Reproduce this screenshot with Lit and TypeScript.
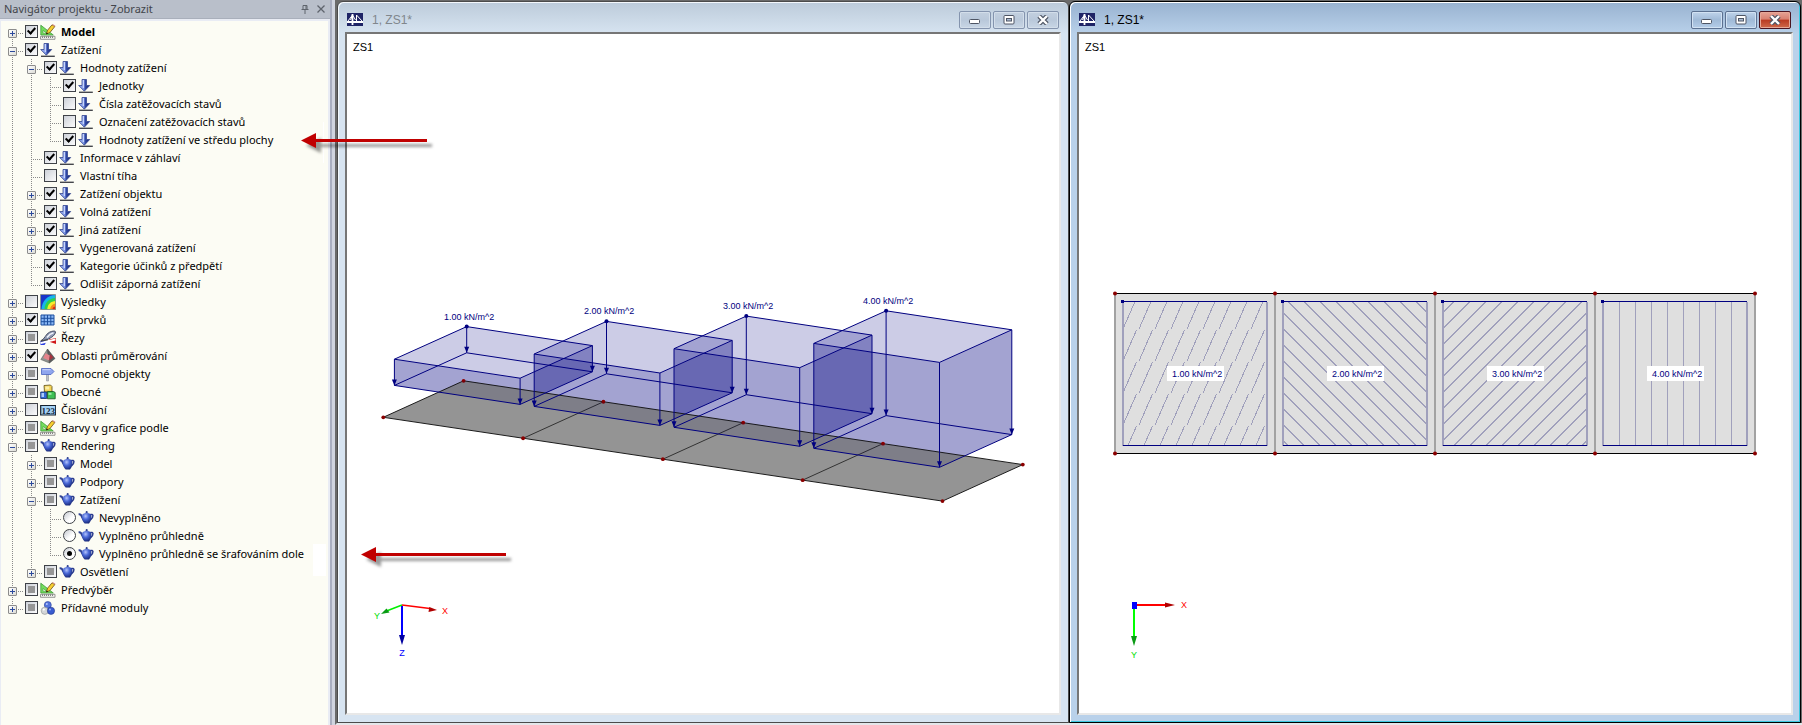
import { LitElement, html, svg, css, nothing, TemplateResult } from "lit";
import { customElement, property, state } from "lit/decorators.js";
import { classMap } from "lit/directives/class-map.js";

type Mark = "on" | "off" | "mixed";
type IconName =
  | "load" | "draft" | "results" | "mesh" | "section" | "pyramid"
  | "sign" | "cubes" | "digits" | "teapot" | "modules";

interface TreeItem {
  id: string;
  label: string;
  icon: IconName;
  mark: Mark;
  kind?: "check" | "radio";
  bold?: boolean;
  folder?: boolean;
  open?: boolean;
  children?: TreeItem[];
}

const leaf = (id: string, label: string, icon: IconName, mark: Mark): TreeItem => ({ id, label, icon, mark });
const folder = (id: string, label: string, icon: IconName, mark: Mark, children?: TreeItem[]): TreeItem => ({
  id, label, icon, mark, folder: true, open: !!children, children,
});

const TREE: TreeItem[] = [
  { ...folder("model", "Model", "draft", "on"), bold: true },
  folder("loads", "Zatížení", "load", "on", [
    folder("load-values", "Hodnoty zatížení", "load", "on", [
      leaf("units", "Jednotky", "load", "on"),
      leaf("case-numbers", "Čísla zatěžovacích stavů", "load", "off"),
      leaf("case-names", "Označení zatěžovacích stavů", "load", "off"),
      leaf("center-values", "Hodnoty zatížení ve středu plochy", "load", "on"),
    ]),
    leaf("header-info", "Informace v záhlaví", "load", "on"),
    leaf("self-weight", "Vlastní tíha", "load", "off"),
    folder("object-loads", "Zatížení objektu", "load", "on"),
    folder("free-loads", "Volná zatížení", "load", "on"),
    folder("other-loads", "Jiná zatížení", "load", "on"),
    folder("generated-loads", "Vygenerovaná zatížení", "load", "on"),
    leaf("prestress", "Kategorie účinků z předpětí", "load", "on"),
    leaf("negative-loads", "Odlišit záporná zatížení", "load", "on"),
  ]),
  folder("results", "Výsledky", "results", "off"),
  folder("mesh", "Síť prvků", "mesh", "on"),
  folder("sections", "Řezy", "section", "mixed"),
  folder("averaging", "Oblasti průměrování", "pyramid", "on"),
  folder("guides", "Pomocné objekty", "sign", "mixed"),
  folder("general", "Obecné", "cubes", "mixed"),
  folder("numbering", "Číslování", "digits", "off"),
  folder("colors", "Barvy v grafice podle", "draft", "mixed"),
  folder("rendering", "Rendering", "teapot", "mixed", [
    folder("r-model", "Model", "teapot", "mixed"),
    folder("r-supports", "Podpory", "teapot", "mixed"),
    folder("r-loads", "Zatížení", "teapot", "mixed", [
      { ...leaf("fill-none", "Nevyplněno", "teapot", "off"), kind: "radio" },
      { ...leaf("fill-clear", "Vyplněno průhledně", "teapot", "off"), kind: "radio" },
      { ...leaf("fill-hatch", "Vyplněno průhledně se šrafováním dole", "teapot", "on"), kind: "radio" },
    ]),
    folder("r-light", "Osvětlení", "teapot", "mixed"),
  ]),
  folder("preselect", "Předvýběr", "draft", "mixed"),
  folder("addons", "Přídavné moduly", "modules", "mixed"),
];

const ICONS: Record<IconName, TemplateResult> = {
  load: svg`
    <defs><linearGradient id="s" x1="0" x2="1"><stop offset="0" stop-color="#9db0f0"/><stop offset=".45" stop-color="#7d97e6"/><stop offset=".6" stop-color="#3048a4"/><stop offset="1" stop-color="#14206a"/></linearGradient></defs>
    <path d="M4 1.500h4.500V7.500h3.200L6.300 13.200.7 7.500H4z" fill="url(#s)" stroke="#33458f" stroke-width=".8"/>
    <path d="M5.400 2v8" stroke="#c9d6fb" stroke-width="1.300"/>
    <path d="M1 14.300h13.800" stroke="#44464c" stroke-width="1.400"/>`,
  draft: svg`
    <path d="M.8 1.200V11h12.500z" fill="#74dd5c" stroke="#3d9a3a" stroke-width=".8"/>
    <path d="M3 6.400v2.800h3.600z" fill="#fbfbf3" stroke="#3d9a3a" stroke-width=".6"/>
    <path d="M6.300 10 7.600 6.200 12 .8l2.800 1.800-4.900 6z" fill="#f7cf30" stroke="#6b4c12" stroke-width=".8"/>
    <path d="m12 .8 1-.6 2.400 1.500-.6.900z" fill="#d98a8a"/>
    <path d="M6.200 10.200l.6-1.800 1.300 1z" fill="#111"/>
    <path d="M.5 12.300h14.500v3H.5z" fill="#f4f4f0" stroke="#80807e" stroke-width=".8"/>
    <path d="M2.500 12.500v1.500m2-1.500v1.500m2-1.500v1.500m2-1.500v1.500m2-1.500v1.500m2-1.500v1.500" stroke="#666" stroke-width=".8"/>`,
  results: svg`
    <path d="M.5.500h15v15H.5z" fill="#1a35c8"/>
    <path d="M15.500 15.500H1.500C1.500 7 8 1 15.500 1z" fill="#18b6e8"/>
    <path d="M15.500 15.500h-11C4.500 9 9 4 15.500 4z" fill="#2fd04a"/>
    <path d="M15.500 15.500H7.300C7.300 10.500 11 7 15.500 7z" fill="#f4ec2a"/>
    <path d="M15.500 15.500h-5.300c0-3 2.300-5.700 5.300-5.700z" fill="#f58a1c"/>
    <path d="M15.500 15.500h-3c0-1.700 1.400-3 3-3z" fill="#e02414"/>
    <path d="M.5.500h15v15H.5z" fill="none" stroke="#8c8f84" stroke-width=".8"/>`,
  mesh: svg`
    <path d="M1 3h13v10H1z" fill="#8ab8f4" stroke="#1d4f9e"/>
    <path d="M4.200 3v10M7.500 3v10M10.800 3v10M1 6.300h13M1 9.700h13" stroke="#1d4f9e" stroke-width="1"/>`,
  section: svg`
    <path d="M.5 11h6.500L4.500 15H.5z" fill="#2b3fe0"/><path d="M9 9.500 16 8v6l-6-2z" fill="#d01818"/>
    <path d="M.5 12 15.500 8.500v2L.8 14z" fill="#fff"/>
    <path d="M.8 10.800C5 9 5.500 4 9.500 2.200 12.500.8 15.500.6 15.500 2c0 2.700-4 6-8.500 7.600z" fill="#8f9ab4" stroke="#3d4458" stroke-width=".9"/>
    <path d="M7 7.500c1.500-2 4-4 6.500-4.700" stroke="#eef2fa" stroke-width="1.500" fill="none"/>
    <path d="M.8 11.200 8 9.800" stroke="#444" stroke-width="1"/>`,
  pyramid: svg`
    <path d="M7.500 1 .8 11.500 9.500 15z" fill="#8f9490" stroke="#4c504e" stroke-width=".5"/>
    <path d="M7.500 1 15 10.500 9.500 15z" fill="#5b5e5e" stroke="#3d4040" stroke-width=".5"/>
    <path d="M5.600 5.200 3.200 10l6 2.600.6-5z" fill="#e5838a"/>
    <path d="M9.900 7.500 9.300 12.600l4-3.100-2.800-3.500z" fill="#a8323c"/>`,
  sign: svg`
    <path d="M6.500 3h2v12h-2z" fill="#bcc0c8" stroke="#80848c" stroke-width=".5"/>
    <path d="M1.500 2.500h9.500l3 3-3 3H1.500z" fill="#8fa6ee" stroke="#4a63c0" stroke-width=".8"/>
    <path d="M2.500 3.700h8" stroke="#cfdbfb"/>`,
  cubes: svg`
    <path d="M4 1.500 10.500 1l1.500 1.500v5.500H4.500z" fill="#f2d254" stroke="#5c4c14" stroke-width=".8"/>
    <path d="M.7 8h6v6.500h-6z" fill="#2f6ad8" stroke="#122c66" stroke-width=".8"/>
    <path d="M7.500 7.500h6l1.700 1v6.300H7.500z" fill="#3fc054" stroke="#14521c" stroke-width=".8"/>
    <path d="M5.300 2.500h4v3h-4z" fill="#fbeea6"/><path d="M1.500 9h2.500v4H1.500z" fill="#a9cbfa"/><path d="M8.500 8.800h3v2h-3z" fill="#a0eaa8"/>`,
  digits: svg`
    <path d="M.7 3.500h15v9.500H.7z" fill="#a5d3f5" stroke="#15202c" stroke-width="1.200"/>
    <text x="8.200" y="11.700" text-anchor="middle" font-family="Liberation Serif, serif" font-size="9" font-weight="bold" fill="#14283c">123</text>`,
  teapot: svg`
    <defs><radialGradient id="t" cx=".38" cy=".28" r=".8"><stop offset="0" stop-color="#b4c4fb"/><stop offset=".4" stop-color="#4a69d8"/><stop offset="1" stop-color="#101e6a"/></radialGradient></defs>
    <path d="M.6 4.300c2-.4 2.700.6 3.200 2.500L5.500 10" fill="none" stroke="#2f4294" stroke-width="1.800"/>
    <path d="M12 4.800c3.500-1.600 4.300 2 .2 5.400" fill="none" stroke="#2a3a8c" stroke-width="1.500"/>
    <path d="M4.500 4.300c2-1.400 6.500-1.400 8.500 0 1.200 3.500 0 6.700-2 9.200H6.700C4.300 11.500 3.300 8 4.500 4.300z" fill="url(#t)"/>
    <path d="M6.200 3.500c1-1.500 4-1.500 5 0z" fill="#4864cc"/><circle cx="8.700" cy="1.900" r="1" fill="#2a3a8c"/>`,
  modules: svg`
    <circle cx="7.800" cy="5" r="3.500" fill="#5474dc" stroke="#2a3f98" stroke-width=".6"/>
    <circle cx="4.800" cy="10.800" r="3.600" fill="#d4d6d8" stroke="#8c9092" stroke-width=".6"/>
    <circle cx="11" cy="10.800" r="3.600" fill="#3a5cd0" stroke="#203488" stroke-width=".6"/>
    <circle cx="6.800" cy="4" r="1" fill="#b4c4fa"/><circle cx="3.800" cy="9.600" r="1.100" fill="#fff"/><circle cx="10" cy="9.600" r="1" fill="#9cb2f8"/>`,
};

@customElement("tree-icon")
class TreeIcon extends LitElement {
  @property() name: IconName = "load";

  static styles = css`
    :host { display: block; width: 16px; height: 16px; flex: none; }
    svg { display: block; }
  `;

  render() {
    return html`<svg width="16" height="16" viewBox="0 0 16 16" aria-hidden="true">${ICONS[this.name]}</svg>`;
  }
}

@customElement("project-navigator")
class ProjectNavigator extends LitElement {
  @state() private closed = new Set<string>();

  static styles = css`
    :host {
      display: flex;
      flex-direction: column;
      box-sizing: border-box;
      background: #e9ecf4;
      border-right: 2px solid #a9aec0;
      font: 11px/18px "Noto Sans", "Open Sans", sans-serif;
      color: #000;
    }
    .head {
      display: flex;
      align-items: center;
      gap: 6px;
      height: 19px;
      box-sizing: border-box;
      padding: 0 4px 0 4px;
      background: #b9bfca;
      border-bottom: 1px solid #a9afbb;
      color: #42454b;
    }
    .title { flex: 1; margin: 0; font: inherit; }
    .tool { width: 10px; height: 10px; padding: 0; border: 0; background: none; display: block; }
    .tool svg { display: block; }
    .body {
      flex: 1;
      margin: 2px 2px 0 1px;
      padding: 2px 0 0 5px;
      background: #fcfcf4;
    }
    .tree { list-style: none; margin: 0; padding: 0; }
    .row { display: flex; height: 18px; white-space: nowrap; }
    .cell { display: grid; width: 19px; height: 18px; flex: none; }
    .cell > * { grid-area: 1 / 1; }
    .twist {
      width: 9px; height: 9px; margin: 6px 0 0 2px; padding: 0; box-sizing: border-box;
      border: 1px solid #8c8c8c; border-radius: 1px;
      background: linear-gradient(135deg, #fff, #dcdcd6);
    }
    .twist svg { display: block; }
    .item { display: flex; }
    .item tree-icon { margin: 1px 5px 0 2px; }
    .bold { font-weight: 700; }
    .check, .radio {
      appearance: none; flex: none; box-sizing: border-box;
      width: 13px; height: 13px; margin: 2px 0 0;
      display: grid; place-items: center;
      border: 1px solid #3f4248;
      background: linear-gradient(135deg, #cdd1d8, #fbfbfc);
    }
    .radio { border-radius: 50%; background: linear-gradient(135deg, #c4c8d0, #fff 60%); }
    .check:checked::before {
      content: ""; width: 3px; height: 6px; margin-top: -3px;
      border: solid #000; border-width: 0 2px 2px 0; transform: rotate(42deg);
    }
    .check:indeterminate::before { content: ""; width: 7px; height: 7px; background: #969696; }
    .radio:checked::before { content: ""; width: 5px; height: 5px; border-radius: 50%; background: #000; }
  `;

  private toggle(id: string) {
    const next = new Set(this.closed);
    next.has(id) ? next.delete(id) : next.add(id);
    this.closed = next;
  }

  private isOpen(item: TreeItem) {
    return !!item.open && !this.closed.has(item.id);
  }

  private dots(x1: number, y1: number, x2: number, y2: number) {
    return svg`<line x1=${x1} y1=${y1} x2=${x2} y2=${y2} stroke="#8a8a8a" stroke-dasharray="1 1"/>`;
  }

  private branch(item: TreeItem, first: boolean, last: boolean) {
    return html`<span class="cell">
      <svg width="19" height="18" aria-hidden="true">
        ${first ? nothing : this.dots(6.5, 0, 6.5, 10)}
        ${last ? nothing : this.dots(6.5, 10, 6.5, 18)}
        ${this.dots(6, 10.5, 17, 10.5)}
      </svg>
      ${item.folder
        ? html`<button class="twist" aria-label=${item.label} @click=${() => this.toggle(item.id)}>
            <svg width="7" height="7" aria-hidden="true">
              <path d=${this.isOpen(item) ? "M1 3.500h5" : "M1 3.500h5M3.500 1v5"} stroke="#2c4a9c"/>
            </svg>
          </button>`
        : nothing}
    </span>`;
  }

  private rows(items: TreeItem[], trail: boolean[]): TemplateResult[] {
    return items.flatMap((item, i) => {
      const last = i === items.length - 1;
      const row = html`<li class="row" role="treeitem" aria-level=${trail.length + 1}>
        ${trail.map((line) => html`<span class="cell">
          <svg width="19" height="18" aria-hidden="true">${line ? this.dots(6.5, 0, 6.5, 18) : nothing}</svg>
        </span>`)}
        ${this.branch(item, i === 0 && trail.length === 0, last)}
        <label class="item">
          ${item.kind === "radio"
            ? html`<input class="radio" type="radio" name="fill" .checked=${item.mark === "on"} />`
            : html`<input class="check" type="checkbox" .checked=${item.mark === "on"} .indeterminate=${item.mark === "mixed"} />`}
          <tree-icon name=${item.icon}></tree-icon>
          <span class=${classMap({ bold: !!item.bold })}>${item.label}</span>
        </label>
      </li>`;
      return item.children && this.isOpen(item)
        ? [row, ...this.rows(item.children, [...trail, !last])]
        : [row];
    });
  }

  render() {
    return html`
      <header class="head">
        <h1 class="title">Navigátor projektu - Zobrazit</h1>
        <button class="tool" aria-label="Připnout">
          <svg width="10" height="10"><path d="M3 1.500h4v4H3zM6 1.500v4M1.500 5.500h7M5 5.500V10" fill="none" stroke="#5f646d"/></svg>
        </button>
        <button class="tool" aria-label="Zavřít">
          <svg width="10" height="10"><path d="m1.500 1.500 7 7m0-7-7 7" stroke="#5f646d" stroke-width="1.300"/></svg>
        </button>
      </header>
      <div class="body"><ul class="tree" role="tree">${this.rows(TREE, [])}</ul></div>
    `;
  }
}

@customElement("doc-window")
class DocWindow extends LitElement {
  @property() caption = "";
  @property({ type: Boolean, reflect: true }) active = false;

  static styles = css`
    :host {
      display: flex; flex-direction: column; box-sizing: border-box; min-width: 0;
      padding: 0 7px 7px;
      border: 1px solid #4b4b4b;
      border-radius: 6px 6px 0 0;
      box-shadow: inset 1px 1px 0 #f4f8fc;
      background: linear-gradient(#bccbda, #d7e4f1 32px);
      font-family: "Liberation Sans", Arial, sans-serif;
    }
    :host([active]) {
      border-color: #000;
      box-shadow: inset 1px 1px 0 #fff, inset -1px -1px 0 #3cc8e0;
      background: linear-gradient(#98b2d0, #b9d1ea 32px);
    }
    .bar { display: flex; align-items: center; height: 30px; padding: 5px 2px 0; box-sizing: border-box; gap: 2px; }
    .logo { display: block; margin-right: 7px; }
    .name { flex: 1; margin: 0; font-size: 12px; line-height: 16px; font-weight: 400; color: #80868c; }
    :host([active]) .name { color: #000; }
    .btn {
      width: 32px; height: 18px; padding: 0; box-sizing: border-box;
      display: grid; place-items: center;
      border: 1px solid #8494ae; border-radius: 2px;
      background: linear-gradient(#c3d0df, #b9c8da 50%, #c8d6e5);
      box-shadow: inset 0 0 0 1px #d3deea;
    }
    :host([active]) .btn {
      border-color: #5c7191;
      background: linear-gradient(#bfd3ea, #a0bad7 50%, #b4cde8);
      box-shadow: inset 0 0 0 1px #d2e2f3;
    }
    :host([active]) .close {
      border-color: #4a1420;
      background: linear-gradient(#e5a395, #d88070 45%, #b93a22 50%, #cf6a4c);
      box-shadow: inset 0 0 0 1px #e6a898;
    }
    .view {
      flex: 1; min-height: 0; display: grid; background: #fff;
      border: 2px solid;
      border-color: #767676 #e8e8e8 #e8e8e8 #767676;
    }
    ::slotted(*) { min-width: 0; min-height: 0; }
  `;

  render() {
    return html`
      <header class="bar">
        <svg class="logo" width="16" height="13" aria-hidden="true">
          <path d="M0 0h16v13H0z" fill="#1f2466"/>
          <path d="M1 8 5.500 2l3 5M9.500 2v6M9.500 2 15 8M5.500 2l-2 5" fill="none" stroke="#fff" stroke-width="1"/>
          <path d="M0 9h16M5.500 1v11" stroke="#fff" stroke-width="1.800"/>
        </svg>
        <h2 class="name">${this.caption}</h2>
        <button class="btn" aria-label="Minimalizovat">
          <svg width="12" height="10"><rect x=".5" y="4.500" width="10" height="4" rx="1" fill="#fff" stroke="#4e5564"/></svg>
        </button>
        <button class="btn" aria-label="Maximalizovat">
          <svg width="12" height="10"><rect x="1" y=".5" width="10" height="8.500" rx="1" fill="#fff" stroke="#4e5564"/><rect x="3.500" y="3.500" width="5" height="2.500" fill="#a9bbd2" stroke="#4e5564"/></svg>
        </button>
        <button class="btn close" aria-label="Zavřít">
          <svg width="12" height="10"><path d="m2 1 8 8m0-8-8 8" stroke="#4e5564" stroke-width="4.600"/><path d="m2 1 8 8m0-8-8 8" stroke="#fff" stroke-width="2.400"/></svg>
        </button>
      </header>
      <div class="view"><slot></slot></div>
    `;
  }
}

const sceneStyles = css`
  :host { display: block; font-family: "Liberation Sans", Arial, sans-serif; }
  svg { display: block; width: 100%; height: 100%; }
  .case { font-size: 11px; fill: #000; }
  .value { font-size: 9px; fill: #000080; }
  .axis { font-size: 9px; text-anchor: middle; }
  .edge { fill: none; stroke: #000080; stroke-width: 1; }
  .navy { fill: #000080; }
  .node { fill: #8b0000; }
`;

type Pt = [number, number];
const add = (a: Pt, b: Pt, k = 1): Pt => [a[0] + b[0] * k, a[1] + b[1] * k];
const pts = (list: Pt[]) => list.map(([x, y]) => `${x.toFixed(1)},${y.toFixed(1)}`).join(" ");
const LOADS = ["1.00", "2.00", "3.00", "4.00"];

@customElement("scene-iso")
class SceneIso extends LitElement {
  static styles = sceneStyles;

  private box(i: number) {
    const left: Pt = [-72.3, 32.6];
    const right: Pt = [125.7, 19];
    const back = add([119.7, 318.8], [139.8, 20.95], i);
    const floor: Pt[] = [back, add(back, right), add(add(back, right), left), add(back, left)];
    const top = floor.map((p) => add(p, [0, -26.2 * (i + 1)]));
    return { floor, top, side: [top[3], top[2], top[1], floor[1], floor[2], floor[3]] };
  }

  render() {
    const boxes = LOADS.map((_, i) => this.box(i));
    const near = LOADS.concat("").map((_, i) => add([36.3, 383.3], [139.8, 20.95], i));
    const far = near.map((p) => add(p, [80.3, -36.5]));
    const plate = pts([near[0], far[0], far[4], near[4]]);
    const nodes = (list: Pt[]) => list.map(([x, y]) => svg`<circle class="node" cx=${x} cy=${y} r="1.900"/>`);
    return html`<svg viewBox="0 0 712 679" role="img" aria-label="ZS1">
      <defs><clipPath id="plate"><polygon points=${plate}/></clipPath></defs>
      <text class="case" x="6" y="17">ZS1</text>
      ${boxes.map((b) => svg`
        <polygon points=${pts(b.top)} fill="#000080" fill-opacity=".2"/>
        <polygon points=${pts(b.side)} fill="#000080" fill-opacity=".36"/>`)}
      <polygon points=${plate} fill="#949494"/>
      <polygon points=${plate} fill="none" stroke="#1c1c1c"/>
      ${[1, 2, 3].map((i) => svg`<polyline points=${pts([near[i], far[i]])} stroke="#333"/>`)}
      ${nodes(far.slice(0, 4))}
      <g clip-path="url(#plate)">
        ${boxes.map((b) => svg`<polygon points=${pts(b.side)} fill="#000046" fill-opacity=".15"/>`)}
      </g>
      ${nodes([...near, far[4]])}
      ${boxes.map((b, i) => svg`
        <polygon class="edge" points=${pts(b.floor)}/>
        <polygon class="edge" points=${pts(b.top)}/>
        ${b.floor.map((p, k) => svg`
          <polyline class="edge" points=${pts([b.top[k], p])}/>
          <polygon class="navy" points=${pts([p, add(p, [-2.5, -6]), add(p, [2.5, -6])])}/>`)}
        <circle class="navy" cx=${b.top[0][0]} cy=${b.top[0][1]} r="2"/>
        <text class="value" x=${Math.round(b.top[0][0]) - 23} y=${Math.round(b.top[0][1]) - 7}>${LOADS[i]} kN/m^2</text>`)}
      <path d="M55 571 37 578" stroke="#00f000" stroke-width="1.500"/>
      <path d="m34 580 5.500-5.500 3 4z" fill="#0a9a14"/>
      <path d="m55 571 28 3.500" stroke="#f00" stroke-width="1.500"/>
      <path d="m90 576-8.500 2 .8-5z" fill="#b00000"/>
      <path d="M55 572v31" stroke="#00f" stroke-width="2"/>
      <path d="m55 611-3-10h6z" fill="#0000a0"/>
      <text class="axis" x="98" y="580" fill="#f00">X</text>
      <text class="axis" x="30" y="585" fill="#00e000">Y</text>
      <text class="axis" x="55" y="622" fill="#00f">Z</text>
    </svg>`;
  }
}

@customElement("scene-top")
class SceneTop extends LitElement {
  static styles = [sceneStyles, css`
    .hatch { fill: none; stroke: #a0a0bc; shape-rendering: crispEdges; }
    .tag { fill: #fff; }
  `];

  /* Hatch lines of one load field, in its own 144 x 144 coordinates. */
  private hatch(kind: number) {
    const steps = (n: number, from = 0) => Array.from({ length: n }, (_, k) => k + from);
    switch (kind) {
      case 0:
        return steps(5).flatMap((r) => steps(9).map((k) => `M${16 * k} ${27 + 32 * r}l13.500-31`)).join("");
      case 1:
        return steps(18, -9).map((k) => `M0 ${10.5 + 16 * k}l144 144`).join("");
      case 2:
        return steps(18).map((k) => `M0 ${10.5 + 16 * k}l144-144`).join("");
      default:
        return steps(8).map((k) => `M${16.5 + 16 * k} 0v144`).join("");
    }
  }

  render() {
    const cells = LOADS.map((_, i) => 36 + 160 * i);
    return html`<svg viewBox="0 0 712 679" role="img" aria-label="ZS1">
      <defs><clipPath id="field"><path d="M0 0h144v144H0z"/></clipPath></defs>
      <text class="case" x="6" y="17">ZS1</text>
      <path d="M36 259.500h640v160H36z" fill="#dfdfdf"/>
      <path d="M36 259v161M196 259v161M356 259v161M516 259v161M676 259v161" stroke="#a2a2a2" stroke-width="2"/>
      <path d="M36 259.500h640M36 419.500h640" stroke="#000"/>
      ${cells.map((x, i) => svg`
        <g transform=${`translate(${x + 8} 268)`} clip-path="url(#field)"><path class="hatch" d=${this.hatch(i)}/></g>
        <path d=${`M${x + 8} 268v144m144-144v144`} stroke="#a0a0bc" stroke-width="2"/>
        <path class="edge" d=${`M${x + 8} 267.500h144m-144 144h144`}/>
        <rect class="navy" x=${x + 6} y="266" width="3" height="3"/>
        <rect class="tag" x=${x + 52} y="332" width="57" height="15"/>
        <text class="value" x=${x + 57} y="343">${LOADS[i]} kN/m^2</text>`)}
      ${[...cells, 676].map((x) => svg`
        <circle class="node" cx=${x} cy="259.500" r="2"/>
        <circle class="node" cx=${x} cy="419.500" r="2"/>`)}
      <path d="M56 571h31" stroke="#f00" stroke-width="2"/>
      <path d="m96 571-10-2.500v5z" fill="#b00000"/>
      <path d="M55 572v32" stroke="#0f0" stroke-width="2"/>
      <path d="m55 612-3-10h6z" fill="#0a9a14"/>
      <path d="M53 568h5v7h-5z" fill="#00f"/>
      <text class="axis" x="105" y="574" fill="#f00">X</text>
      <text class="axis" x="55" y="624" fill="#00e000">Y</text>
    </svg>`;
  }
}

@customElement("app-root")
class AppRoot extends LitElement {
  static styles = css`
    :host {
      display: grid;
      grid-template-columns: 332px 1fr;
      min-height: 100vh;
      position: relative;
      background: #d0d4df;
    }
    .desk {
      display: grid;
      grid-template-columns: 1fr 1fr;
      margin-left: 3px;
      padding: 1px 1px 0 0;
      border-left: 2px solid #6a6a6a;
      border-bottom: 2px solid #e4e6ea;
      background: #6a6a6a;
      min-width: 0;
    }
    .notes { position: absolute; top: 0; left: 0; pointer-events: none; }
  `;

  private arrow(x: number, y: number, length: number) {
    const shape = `M${x} ${y}l15-7.500v6h${length - 15}v3h${15 - length}v6z`;
    return svg`
      <path d=${shape} transform="translate(5 5)" fill="#000" fill-opacity=".4" filter="url(#soft)"/>
      <path d=${shape} fill="#c00000"/>`;
  }

  render() {
    return html`
      <project-navigator></project-navigator>
      <main class="desk">
        <doc-window caption="1, ZS1*"><scene-iso></scene-iso></doc-window>
        <doc-window caption="1, ZS1*" active><scene-top></scene-top></doc-window>
      </main>
      <svg class="notes" width="540" height="600" aria-hidden="true">
        <defs><filter id="soft" x="-10%" y="-60%" width="120%" height="220%"><feGaussianBlur stdDeviation="1.500"/></filter></defs>
        <path d="M313 544h13v32h-13zM323 122h1v41h-1z" fill="#fff"/>
        ${this.arrow(301, 140.5, 126)}
        ${this.arrow(361, 554.5, 145)}
      </svg>
    `;
  }
}
